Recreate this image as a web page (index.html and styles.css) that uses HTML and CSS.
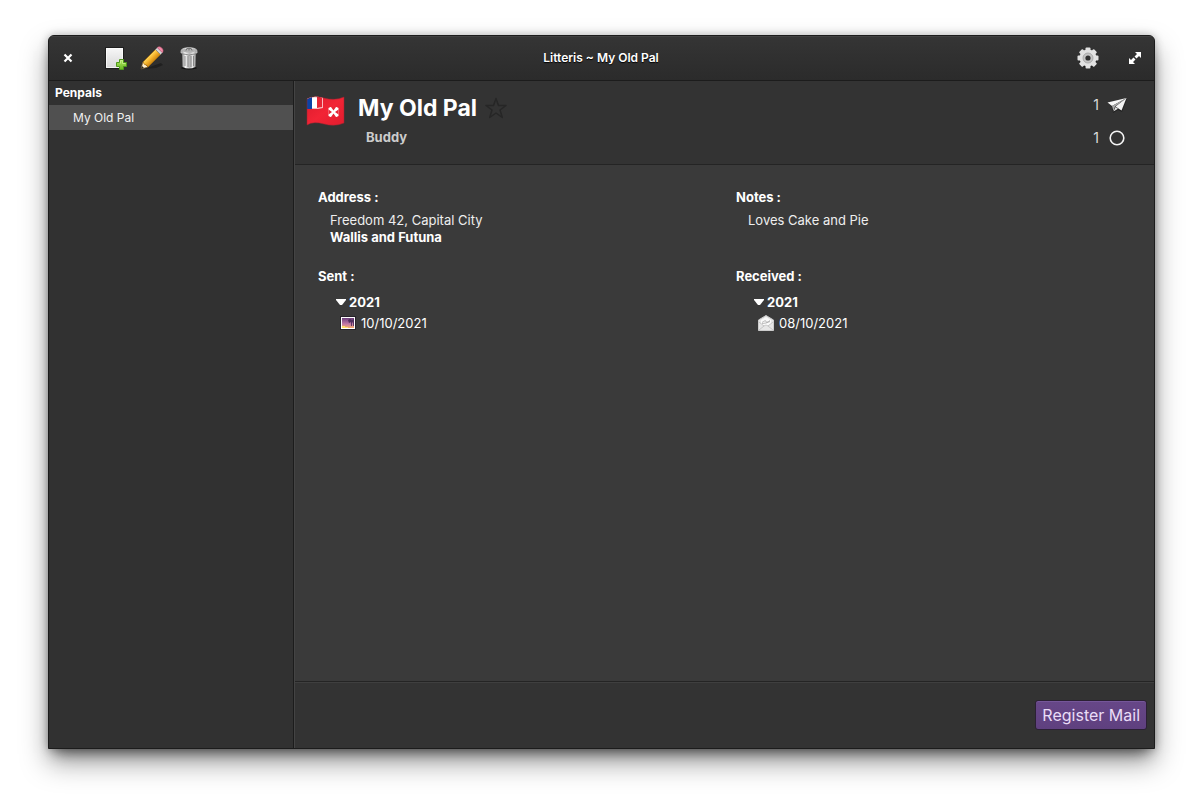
FILE: index.html
```html
<!DOCTYPE html>
<html lang="en">
<head>
<meta charset="utf-8">
<meta name="viewport" content="width=device-width, initial-scale=1">
<title>Litteris ~ My Old Pal</title>
<link rel="stylesheet" href="styles.css">
</head>
<body>
<div class="window">
  <header class="titlebar">
    <div class="tools">
      <button class="tool tool-close" aria-label="Close">
        <svg width="10" height="10" viewBox="0 0 10 10"><path d="M1.500 1.500l7 7M8.500 1.500l-7 7" stroke="#fff" stroke-width="2.200"/></svg>
      </button>
      <button class="tool" aria-label="New penpal">
        <svg width="24" height="24" viewBox="0 0 24 24">
          <defs>
            <linearGradient id="page" x1="0" y1="0" x2="0" y2="1"><stop offset="0" stop-color="#f7f7f7"/><stop offset="1" stop-color="#d8d8d8"/></linearGradient>
            <linearGradient id="plus" x1="0" y1="0" x2="0" y2="1"><stop offset="0" stop-color="#b5ec62"/><stop offset="1" stop-color="#68b723"/></linearGradient>
          </defs>
          <path d="M2 1h19v22H2z" fill="#111" opacity=".6"/>
          <path d="M3 2h17v20H3z" fill="url(#page)"/>
          <path d="M3.500 2.500h16v19h-16z" fill="none" stroke="#fff" opacity=".7"/>
          <path d="M16.500 13.500h4v3h3v4h-3v3h-4v-3h-3v-4h3z" fill="url(#plus)" stroke="#4f9a1c"/>
          <path d="M17.500 17.500v-3h2v3h3" fill="none" stroke="#d1f49b" opacity=".7"/>
        </svg>
      </button>
      <button class="tool" aria-label="Edit penpal">
        <svg width="26" height="26" viewBox="0 0 26 26">
          <defs><linearGradient id="wood" gradientUnits="userSpaceOnUse" x1="10" y1="10" x2="15" y2="15"><stop offset="0" stop-color="#ffe16b"/><stop offset=".5" stop-color="#f9b72f"/><stop offset="1" stop-color="#d48e15"/></linearGradient></defs>
          <path d="M5 24L22 18l2 2-7 3z" fill="#111" opacity=".5"/>
          <path d="M2 24l2-7 5 5z" fill="#fff0cf" stroke="#8b6020" stroke-width=".6"/>
          <path d="M2 24l1-3 2 2z" fill="#262626"/>
          <path d="M4 17L16.500 4.500l5 5L9 22l-1.500-2-2-.5z" fill="url(#wood)" stroke="#a66b0c" stroke-width=".7"/>
          <path d="M16.500 4.500l2-2 5 5-2 2z" fill="#d6d6d6" stroke="#888" stroke-width=".6"/>
          <path d="M18.300 2.700c2-3 8 2 5 5z" fill="#f48ba7" stroke="#b75472" stroke-width=".6"/>
        </svg>
      </button>
      <button class="tool" aria-label="Delete penpal">
        <svg width="24" height="24" viewBox="0 0 24 24">
          <defs><linearGradient id="metal"><stop offset="0" stop-color="#888"/><stop offset=".25" stop-color="#f4f4f4"/><stop offset=".55" stop-color="#b4b4b4"/><stop offset=".75" stop-color="#e4e4e4"/><stop offset="1" stop-color="#888"/></linearGradient></defs>
          <ellipse cx="12" cy="22" rx="8" ry="1.500" fill="#111"/>
          <path d="M5 6h14l-.5 15q-6.500 3-13 0z" fill="url(#metal)"/>
          <path d="M8 10v10M11 10v11M14 10v11M16.500 10v10" stroke="#777" stroke-width=".8"/>
          <path d="M4 5q0-3 8-3.500Q20 2 20 5v2q-8 3-16 0z" fill="url(#metal)" stroke="#eee" stroke-width=".6"/>
          <ellipse cx="12" cy="4.500" rx="6.500" ry="2" fill="#b3b3b3"/>
          <path d="M9 4.500q0-2.500 3-2.500t3 2.500M12 2v2.500" fill="none" stroke="#5e5e5e" stroke-width=".8"/>
          <path d="M4 7.500q8 3 16 0" fill="none" stroke="#666" stroke-width=".7"/>
        </svg>
      </button>
    </div>
    <h1 class="title">Litteris ~ My Old Pal</h1>
    <div class="tools tools-end">
      <button class="tool" aria-label="Settings">
        <svg width="24" height="24" viewBox="0 0 24 24">
          <circle cx="12" cy="13.500" r="9" fill="#111" opacity=".6"/>
          <g fill="#e2e2e2">
            <circle cx="12" cy="12" r="8.500"/>
            <rect id="tooth" x="9.500" y="1.500" width="5" height="21" rx="1"/>
            <use href="#tooth" transform="rotate(45 12 12)"/><use href="#tooth" transform="rotate(90 12 12)"/><use href="#tooth" transform="rotate(135 12 12)"/>
          </g>
          <circle cx="12" cy="12" r="5" fill="#c4c4c4" stroke="#a0a0a0" stroke-width=".8"/>
          <circle cx="12" cy="12" r="2.600" fill="#303030"/>
        </svg>
      </button>
      <button class="tool" aria-label="Maximize">
        <svg width="12" height="12" viewBox="0 0 12 12"><path d="M6 0h6v6l-2-2-2.500 2.500-2-2L8 2zM0 6l2 2 2.500-2.500 2 2L4 10l2 2H0z" fill="#fff"/></svg>
      </button>
    </div>
  </header>
  <div class="body">
    <nav class="sidebar" aria-label="Penpals">
      <h2 class="sidebar-head">Penpals</h2>
      <a class="sidebar-item" href="#pal" aria-current="page">My Old Pal</a>
    </nav>
    <main class="main" id="pal">
      <section class="profile">
        <svg class="flag" width="40" height="32" viewBox="0 0 40 32">
          <defs>
            <clipPath id="wave"><path d="M1 4q6-4 17-1t20-1v26q-9 4-20 1T1 30z"/></clipPath>
            <linearGradient id="red" x1="0" y1="0" x2="1" y2="1"><stop offset="0" stop-color="#d81b2c"/><stop offset=".5" stop-color="#f22435"/><stop offset="1" stop-color="#df1b2d"/></linearGradient>
          </defs>
          <g clip-path="url(#wave)">
            <path d="M0 0h40v32H0z" fill="url(#red)"/>
            <path d="M0 0h17v13l-5 1H0z" fill="#f9b9be"/><path d="M0 0h16v12l-4 1H0z" fill="#fff"/><path d="M0 0h6v14H0z" fill="#0b43a6"/><path d="M11 0h5v12l-5 1z" fill="#e52535"/>
            <path d="M22.500 13l2-1h6l2 1v8l-2 1h-6l-2-1z" fill="#fff"/>
            <path d="M25 12h5l-2.500 3.500zM25 22h5l-2.500-3.500zM22.500 14.500v5L26 17zM32.500 14.500v5L29 17z" fill="#e52535"/>
          </g>
          <path d="M1 4q6-4 17-1t20-1v26q-9 4-20 1T1 30z" fill="none" stroke="#9b2630" stroke-width=".5"/>
        </svg>
        <div class="identity">
          <div class="name-row">
            <h2 class="name">My Old Pal</h2>
            <button class="star" aria-label="Favourite">
              <svg width="22" height="22" viewBox="0 0 22 22"><path d="M11 1.500l2.500 7h7.500l-6 4.500 2.300 7.500L11 16l-6.300 4.500L7 13 1 8.500h7.500z" fill="none" stroke="#262626" stroke-width="1.500" stroke-linejoin="round"/></svg>
            </button>
          </div>
          <p class="nickname">Buddy</p>
        </div>
        <div class="counts">
          <div class="count"><span>1</span>
            <svg width="20" height="20" viewBox="0 0 20 20"><path d="M1 8L20 4l-5 13-4-2-5 3-1-6z" fill="#111" opacity=".5"/><path d="M.5 7.500L19.500 3 5 11z" fill="#f8f8f8"/><path d="M19.500 3L8.500 11.500l6 4z" fill="#f4f4f4"/><path d="M5 11L19.500 3 8 11.500 6.500 16z" fill="#aaa"/><path d="M6.500 16.500l2-4.500 2.500 1.700z" fill="#ddd"/></svg>
          </div>
          <div class="count"><span>1</span>
            <svg width="20" height="20" viewBox="0 0 20 20"><circle cx="10" cy="10" r="6.800" fill="none" stroke="#f4f4f4" stroke-width="1.600"/></svg>
          </div>
        </div>
      </section>
      <div class="details">
        <section class="field">
          <h3 class="label">Address :</h3>
          <p class="text">Freedom 42, Capital City<br><b>Wallis and Futuna</b></p>
        </section>
        <section class="field">
          <h3 class="label">Notes :</h3>
          <p class="text">Loves Cake and Pie</p>
        </section>
        <section class="field">
          <h3 class="label">Sent :</h3>
          <details class="tree" open>
            <summary class="year"><svg width="10" height="6" viewBox="0 0 10 6"><path d="M0 0h10v1L6 6H4L0 1z" fill="#fff"/></svg>2021</summary>
            <div class="mail">
              <svg width="16" height="16" viewBox="0 0 16 16">
                <defs><linearGradient id="dusk" x1="0" y1="0" x2="0" y2="1"><stop offset="0" stop-color="#6b3f7c"/><stop offset=".6" stop-color="#c278a8"/><stop offset="1" stop-color="#f8b06b"/></linearGradient></defs>
                <path d="M0 1h16v14H0z" fill="#262329"/><path d="M1 2h14v12H1z" fill="#fff"/><path d="M2 3h12v10H2z" fill="url(#dusk)"/>
                <path d="M8 5l2-1 2 1 2-1v7h-1V7l-1 1v3h-1V7l-2 1z" fill="#3f2450" opacity=".8"/><path d="M2 11h3v1h3v1H2z" fill="#ffe16b"/>
              </svg>10/10/2021</div>
          </details>
        </section>
        <section class="field">
          <h3 class="label">Received :</h3>
          <details class="tree" open>
            <summary class="year"><svg width="10" height="6" viewBox="0 0 10 6"><path d="M0 0h10v1L6 6H4L0 1z" fill="#fff"/></svg>2021</summary>
            <div class="mail">
              <svg width="16" height="16" viewBox="0 0 16 16"><path d="M.5 5L8 .5 15.500 5v10.500H.5z" fill="#e6e6e6" stroke="#ccc"/><path d="M3 5l5-3 5 3v4l-5 2-5-2z" fill="#fafafa"/><path d="M4 7.500q4-3 4-1t4-1M4 8.500q4 0 8-2" fill="none" stroke="#aaa" stroke-width=".8"/><path d="M1 7l5 4-5 4M15 7l-5 4 5 4M6 11q2-2 4 0" fill="none" stroke="#bbb" stroke-width=".8"/></svg>08/10/2021</div>
          </details>
        </section>
      </div>
      <footer class="actions"><button class="register">Register Mail</button></footer>
    </main>
  </div>
</div>
</body>
</html>
```

FILE: styles.css
```css
* { box-sizing: border-box; }

body {
  margin: 0;
  min-height: 100vh;
  display: flex;
  padding: 35px 48px 61px;
  background: #fff;
  color: #fff;
  font: 13px/17px Inter, "Open Sans", sans-serif;
}

h1, h2, h3, p { margin: 0; font-size: inherit; }

button {
  border: 0;
  padding: 0;
  background: none;
  color: inherit;
  font: inherit;
}

svg { display: block; flex: none; }

.window {
  flex: 1;
  display: flex;
  flex-direction: column;
  overflow: hidden;
  border: 1px solid #1c1c1c;
  border-radius: 6px 6px 0 0;
  background: #333;
  box-shadow: 0 14px 28px rgba(0, 0, 0, .35), 0 10px 14px -6px rgba(0, 0, 0, .5), 0 0 8px rgba(0, 0, 0, .25);
}

.titlebar {
  display: grid;
  grid-template-columns: 1fr auto 1fr;
  align-items: center;
  height: 45px;
  padding: 0 13px 0 12px;
  background: linear-gradient(#353535, #2b2b2b);
  border-bottom: 1px solid #1c1c1c;
  box-shadow: inset 0 1px #414141;
}

.title {
  padding-bottom: 2px;
  font-size: 12px;
  font-weight: 600;
  text-shadow: 0 1px 1px #000;
}

.tools { display: flex; align-items: center; gap: 12px; }
.tools-end { justify-content: flex-end; gap: 29px; }
.tool-close { margin: 0 18px 0 2px; }

.body { flex: 1; display: flex; }

.sidebar {
  width: 245px;
  flex: none;
  border-right: 1px solid #1c1c1c;
  background: #313131;
  font-size: 12px;
}

.sidebar-head { padding: 0 6px; line-height: 24px; font-weight: 700; }

.sidebar-item {
  display: block;
  padding-left: 24px;
  line-height: 25px;
  background: #505050;
  color: #f0f0f0;
  text-decoration: none;
}

.main {
  flex: 1;
  display: flex;
  flex-direction: column;
  border-left: 1px solid #444;
  background: #3a3a3a;
}

.profile {
  display: flex;
  align-items: flex-start;
  min-height: 84px;
  padding: 12px 27px 0 11px;
  background: #333;
  border-bottom: 1px solid #242424;
}

.flag { margin-top: 2px; }
.identity { flex: 1; padding-left: 12px; }
.name-row { display: flex; align-items: center; gap: 8px; }
.name { font-size: 23px; line-height: 30px; font-weight: 700; }
.nickname { padding: 6px 8px 0; font-weight: 700; color: #ccc; }

.counts { display: grid; gap: 13px; padding-top: 2px; }

.count {
  display: flex;
  align-items: center;
  gap: 8px;
  font-size: 14px;
  line-height: 20px;
  color: #ddd;
}

.details {
  flex: 1;
  display: grid;
  grid-template-columns: 1fr 1fr;
  align-content: start;
  row-gap: 22px;
  padding: 24px 0 24px 23px;
}

.label { font-weight: 700; }
.text { padding: 6px 12px 0; color: #eee; }
.text b { color: #fff; }

.tree { padding: 7px 18px 0; }

.year {
  display: flex;
  align-items: center;
  gap: 3px;
  line-height: 20px;
  font-weight: 700;
  list-style: none;
}

.mail {
  display: flex;
  align-items: center;
  gap: 5px;
  padding-left: 4px;
  line-height: 22px;
}

.actions {
  display: flex;
  justify-content: flex-end;
  align-items: center;
  height: 67px;
  padding: 0 7px;
  background: #333;
  border-top: 1px solid #242424;
  box-shadow: inset 0 1px #3f3f3f;
}

.register {
  padding: 4px 6px;
  border: 1px solid #2b2034;
  border-radius: 3px;
  background: linear-gradient(#674788, #5f407f);
  box-shadow: inset 0 1px #75569a;
  color: #eadcf7;
  font-size: 16px;
  line-height: 20px;
}
```
